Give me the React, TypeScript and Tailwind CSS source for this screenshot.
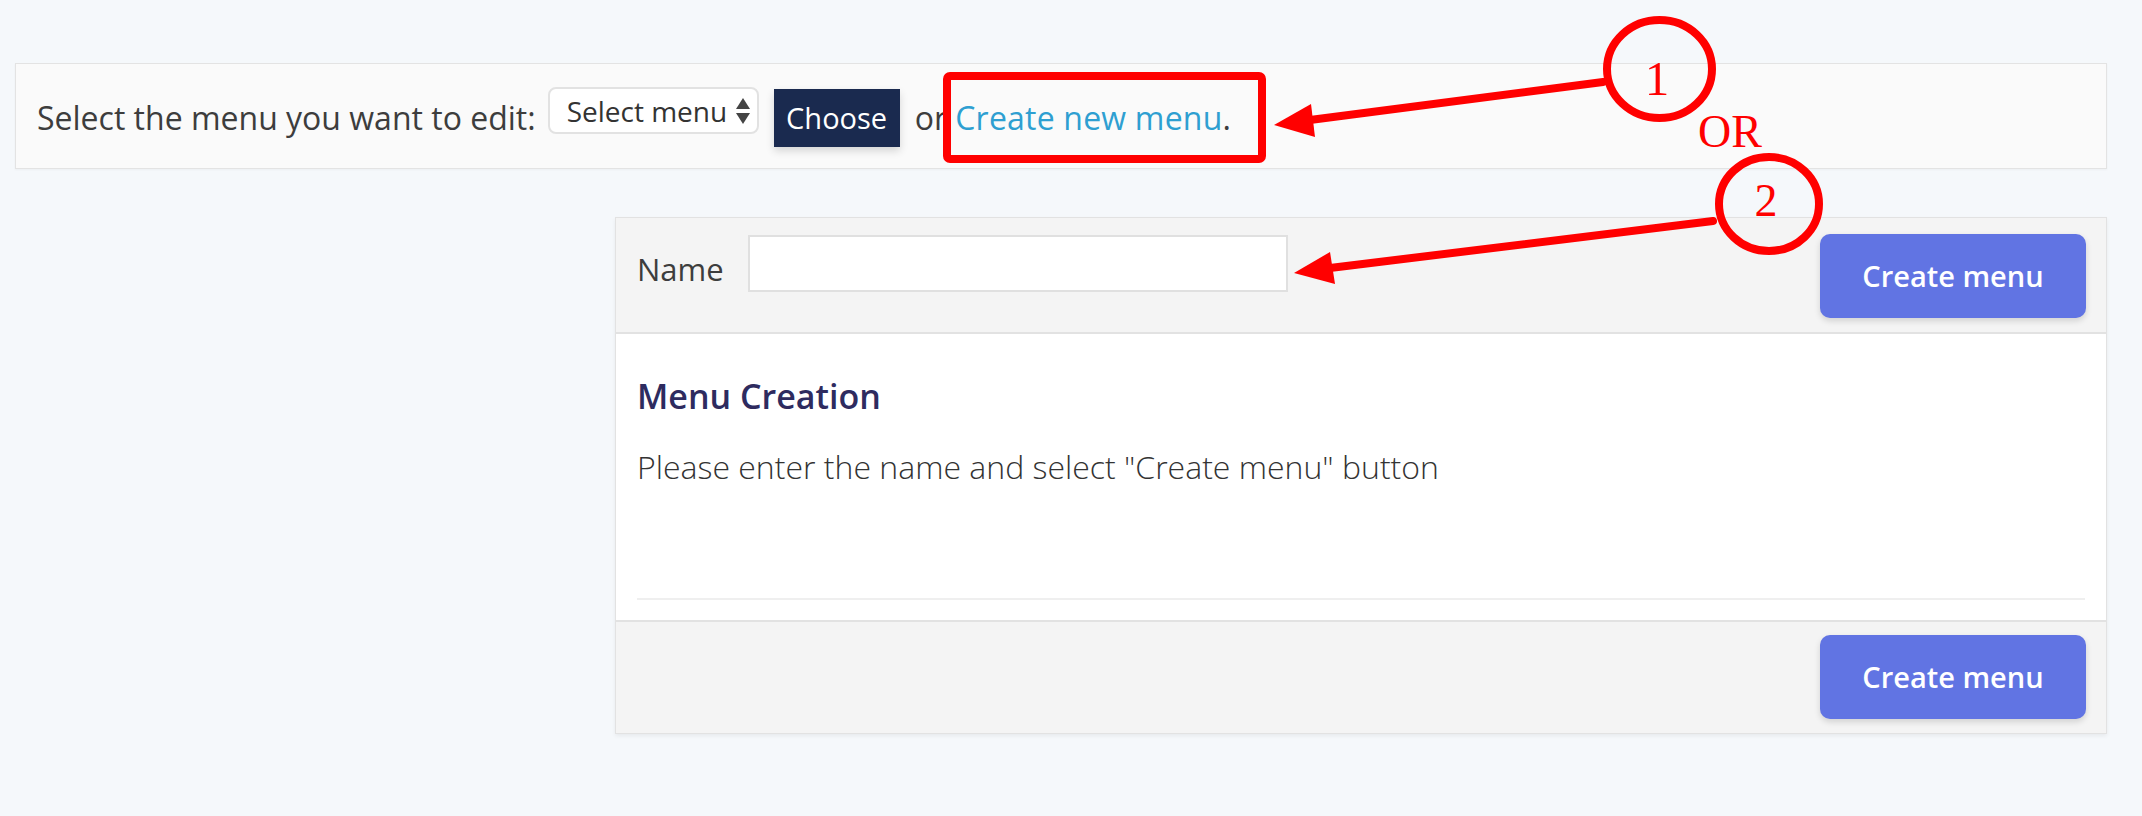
// Menu editor screen with the red how-to annotations drawn over it

function SelectArrows() {
  return (
    <svg width="14" height="26" viewBox="0 0 14 26" className="shrink-0">
      <path d="M7 0 L14 11 L0 11 Z" fill="#444" />
      <path d="M0 15 L14 15 L7 26 Z" fill="#444" />
    </svg>
  );
}

function CreateButton() {
  return (
    <button className="h-[84px] w-[266px] rounded-[10px] bg-[#6174e3] text-[29px] font-semibold text-white shadow-[0_3px_6px_rgba(0,0,0,0.14)]">
      Create menu
    </button>
  );
}

function Annotations() {
  return (
    <svg
      className="pointer-events-none absolute left-0 top-0"
      width="2142"
      height="816"
      viewBox="0 0 2142 816"
    >
      {/* box round the link */}
      <rect x="947" y="76" width="315" height="83" rx="3" fill="none" stroke="#ff0000" strokeWidth="8" />

      {/* arrow 1 */}
      <line x1="1603" y1="82" x2="1310" y2="120" stroke="#ff0000" strokeWidth="8" strokeLinecap="round" />
      <path d="M1274 125 L1311 104 L1315 137 Z" fill="#ff0000" />
      <ellipse cx="1659.5" cy="69" rx="52.5" ry="49" fill="none" stroke="#ff0000" strokeWidth="8" />
      <text x="1657" y="95" textAnchor="middle" fill="#ff0000" fontSize="49" fontFamily="'Liberation Serif', serif">
        1
      </text>

      <text x="1730" y="147" textAnchor="middle" fill="#ff0000" fontSize="46" fontFamily="'Liberation Serif', serif">
        OR
      </text>

      {/* arrow 2 */}
      <line x1="1713" y1="221" x2="1330" y2="268" stroke="#ff0000" strokeWidth="8" strokeLinecap="round" />
      <path d="M1294 273 L1330 252 L1335 284 Z" fill="#ff0000" />
      <ellipse cx="1769" cy="204" rx="50" ry="47" fill="none" stroke="#ff0000" strokeWidth="8" />
      <text x="1766" y="216" textAnchor="middle" fill="#ff0000" fontSize="46" fontFamily="'Liberation Serif', serif">
        2
      </text>
    </svg>
  );
}

export default function App() {
  return (
    <div className="relative min-h-[816px] w-full bg-[#f5f8fb] pb-[80px] pl-[15px] pr-[35px] pt-[63px] font-['Open_Sans',sans-serif]">
      {/* Menu picker */}
      <div className="flex h-[106px] items-center border border-[#e3e3e3] bg-[#fafafa] pl-[21px] pt-[4px] shadow-[0_1px_2px_rgba(0,0,0,0.04)]">
        <span className="text-[32px] text-[#3d3d3d]">Select the menu you want to edit:</span>
        <div className="mb-[15px] ml-[12px] flex h-[47px] w-[211px] items-center justify-between rounded-[8px] border-2 border-[#e2e2e2] bg-white pl-[17px] pr-[7px] text-[28px] text-[#333]">
          <span>Select menu</span>
          <SelectArrows />
        </div>
        <button className="ml-[15px] h-[58px] w-[126px] bg-[#1a2a4f] text-[29px] text-white shadow-[0_4px_8px_rgba(0,0,0,0.15)]">
          Choose
        </button>
        <span className="ml-[15px] text-[32px] text-[#3d3d3d]">
          or <a className="tracking-[0.2px] text-[#2e9fd1]">Create new menu</a>.
        </span>
      </div>

      {/* New menu panel */}
      <div className="ml-[600px] mt-[48px] border border-[#e2e2e2] bg-white shadow-[0_2px_4px_rgba(0,0,0,0.06)]">
        <div className="flex items-start justify-between border-b-2 border-[#e2e2e2] bg-[#f4f4f4] pb-[14px] pl-[21px] pr-[20px] pt-[16px]">
          <div className="flex items-start">
            <label className="mt-[14px] text-[31px] leading-[42px] text-[#3d3d3d]">Name</label>
            <input className="ml-[24px] mt-[1px] h-[57px] w-[540px] border-2 border-[#e0e0e0] bg-white outline-none" />
          </div>
          <CreateButton />
        </div>

        <div className="px-[21px] pb-[20px] pt-[42px]">
          <h3 className="text-[34px] font-semibold leading-[40px] text-[#2e2b5f]">Menu Creation</h3>
          <p className="mt-[31px] text-[32px] font-light leading-[40px] text-[#333]">
            Please enter the name and select "Create menu" button
          </p>
          <div className="mt-[111px] h-[2px] bg-[#efefef]" />
        </div>

        <div className="flex justify-end border-t-2 border-[#e2e2e2] bg-[#f4f4f4] pb-[14px] pr-[20px] pt-[13px]">
          <CreateButton />
        </div>
      </div>

      <Annotations />
    </div>
  );
}
